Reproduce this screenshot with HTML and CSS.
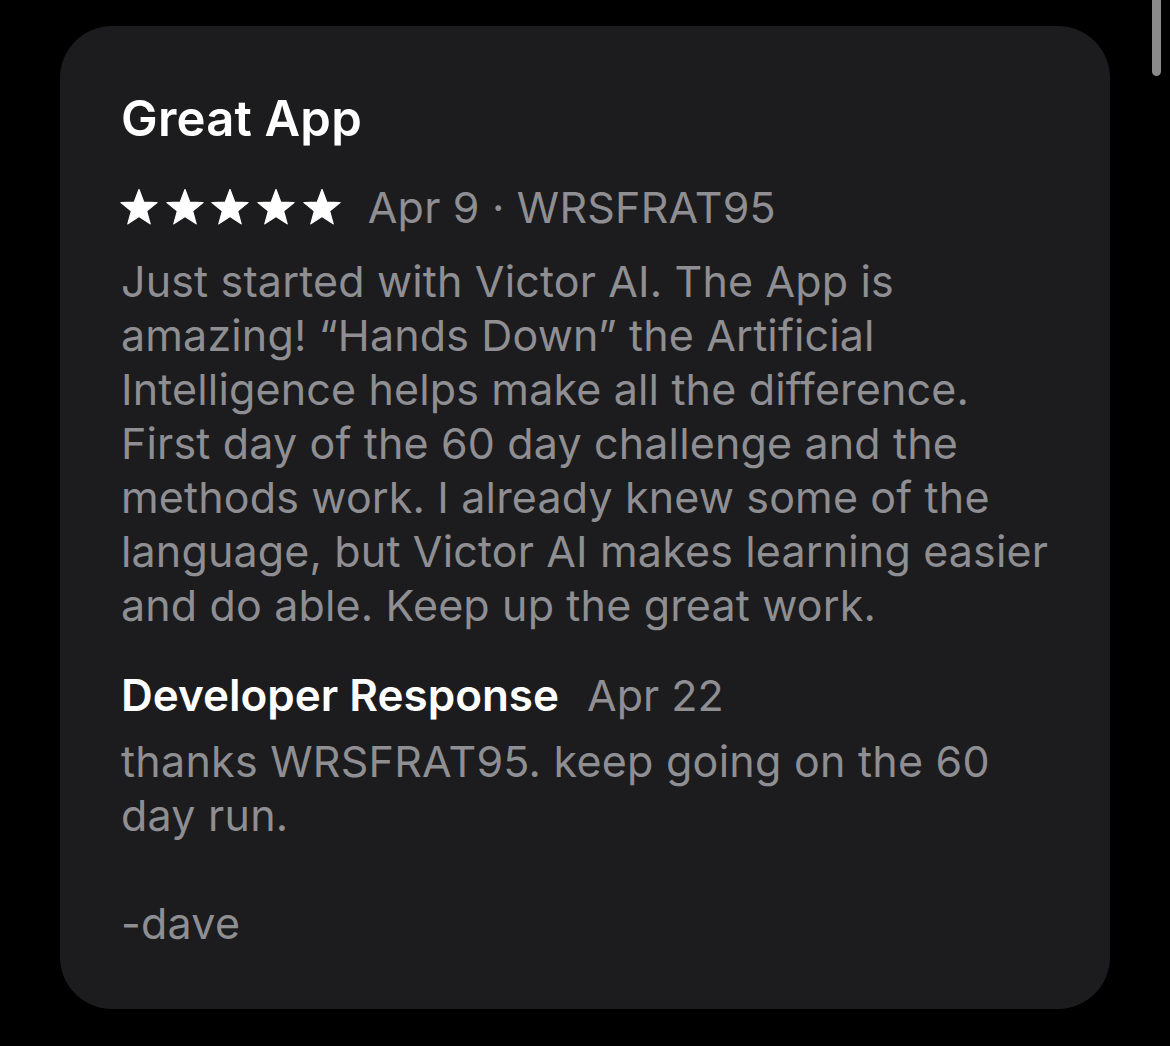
FILE: index.html
```html
<!DOCTYPE html>
<html lang="en">
<head>
<meta charset="utf-8">
<link rel="stylesheet" href="styles.css">
</head>
<body>
<div class="scrollbar"></div>
<main class="page">
  <article class="card">
    <h1 class="title">Great App</h1>
    <div class="meta">
      <div class="stars">
        <svg class="star" viewBox="0 0 38 36"><path d="M19 0.5L23.7 13.03L37.07 13.63L26.61 21.97L30.17 34.87L19 27.5L7.83 34.87L11.39 21.97L0.93 13.63L14.3 13.03Z"/></svg>
        <svg class="star" viewBox="0 0 38 36"><path d="M19 0.5L23.7 13.03L37.07 13.63L26.61 21.97L30.17 34.87L19 27.5L7.83 34.87L11.39 21.97L0.93 13.63L14.3 13.03Z"/></svg>
        <svg class="star" viewBox="0 0 38 36"><path d="M19 0.5L23.7 13.03L37.07 13.63L26.61 21.97L30.17 34.87L19 27.5L7.83 34.87L11.39 21.97L0.93 13.63L14.3 13.03Z"/></svg>
        <svg class="star" viewBox="0 0 38 36"><path d="M19 0.5L23.7 13.03L37.07 13.63L26.61 21.97L30.17 34.87L19 27.5L7.83 34.87L11.39 21.97L0.93 13.63L14.3 13.03Z"/></svg>
        <svg class="star" viewBox="0 0 38 36"><path d="M19 0.5L23.7 13.03L37.07 13.63L26.61 21.97L30.17 34.87L19 27.5L7.83 34.87L11.39 21.97L0.93 13.63L14.3 13.03Z"/></svg>
      </div>
      <span class="meta-text">Apr 9 · WRSFRAT95</span>
    </div>
    <p class="body">Just started with Victor AI. The App is<br>amazing! “Hands Down” the Artificial<br>Intelligence helps make all the difference.<br>First day of the 60 day challenge and the<br>methods work. I already knew some of the<br>language, but Victor AI makes learning easier<br>and do able. Keep up the great work.</p>
    <div class="dev-head">
      <span class="dev-title">Developer Response</span>
      <span class="dev-date">Apr 22</span>
    </div>
    <p class="body reply">thanks WRSFRAT95. keep going on the 60<br>day run.<br><br>-dave</p>
  </article>
</main>
</body>
</html>
```
FILE: styles.css
```css
html, body {
  margin: 0;
  padding: 0;
  background: #000;
  height: 100%;
}
body {
  font-family: Inter, "Noto Sans", sans-serif;
  overflow: hidden;
  position: relative;
}
.scrollbar {
  position: absolute;
  top: -10px;
  left: 1152px;
  width: 9px;
  height: 86px;
  border-radius: 5px;
  background: #8a8a8a;
}
.page {
  padding: 26px 60px 0 60px;
}
.card {
  background: #1c1c1e;
  border-radius: 52px;
  padding: 66px 20px 59px 61px;
  width: 969px;
}
.title {
  margin: 0;
  color: #fff;
  font-size: 49px;
  font-weight: 600;
  line-height: 54px;
  letter-spacing: 0.2px;
}
.meta {
  margin-top: 34px;
  display: flex;
  align-items: center;
  height: 54px;
}
.stars {
  display: flex;
  gap: 7.7px;
  margin-left: -1px;
}
.star {
  width: 38px;
  height: 36px;
  fill: #fff;
  stroke: #fff;
  stroke-width: 1.2;
  stroke-linejoin: round;
}
.meta-text {
  margin-left: 27px;
  color: #8e8e93;
  font-size: 43px;
  letter-spacing: 0.2px;
}
.body {
  margin: 20px 0 0;
  color: #8e8e93;
  font-size: 43px;
  line-height: 54px;
  letter-spacing: 0.15px;
}
.dev-head {
  margin-top: 36px;
  display: flex;
  align-items: baseline;
  line-height: 54px;
}
.dev-title {
  color: #fff;
  font-size: 44px;
  font-weight: 600;
}
.dev-date {
  margin-left: 28px;
  color: #8e8e93;
  font-size: 43px;
}
.reply {
  margin-top: 12px;
  letter-spacing: 0.25px;
}
```
